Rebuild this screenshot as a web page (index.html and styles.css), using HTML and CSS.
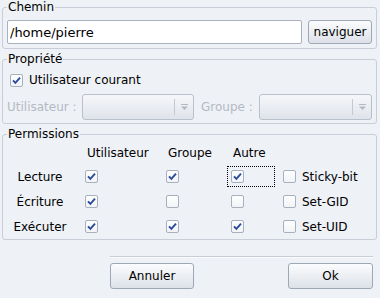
FILE: index.html
```html
<!DOCTYPE html>
<html lang="fr">
<head>
  <meta charset="UTF-8" />
  <title>Permissions</title>
  <link rel="stylesheet" href="styles.css">
</head>
<body>

  <!-- Chemin -->
  <fieldset class="group">
    <legend>Chemin</legend>
    <div class="path-row">
      <input class="path-input" type="text" value="/home/pierre">
      <button class="btn btn-browse">naviguer</button>
    </div>
  </fieldset>

  <!-- Propriété -->
  <fieldset class="group">
    <legend>Propriété</legend>
    <div class="check-row">
      <span class="cb"><svg viewBox="0 0 11 11"><path d="M2 5.3 L4.4 7.8 L9 2.6"/></svg></span>
      <span>Utilisateur courant</span>
    </div>
    <div class="owner-row">
      <span class="dim owner-label">Utilisateur :</span>
      <span class="combo combo-user"><span class="combo-arrow"><svg viewBox="0 0 9 8"><path class="bar" d="M1 1.5 H8"/><path class="tri" d="M1 3.5 H8 L4.5 7 Z"/></svg></span></span>
      <span class="dim group-label">Groupe :</span>
      <span class="combo combo-group"><span class="combo-arrow"><svg viewBox="0 0 9 8"><path class="bar" d="M1 1.5 H8"/><path class="tri" d="M1 3.5 H8 L4.5 7 Z"/></svg></span></span>
    </div>
  </fieldset>

  <!-- Permissions -->
  <fieldset class="group">
    <legend>Permissions</legend>
    <div class="perm-grid">
      <span></span>
      <span class="col-head">Utilisateur</span>
      <span class="col-head">Groupe</span>
      <span class="col-head">Autre</span>
      <span></span>

      <span class="row-label">Lecture</span>
      <span class="cell"><span class="cb"><svg viewBox="0 0 11 11"><path d="M2 5.3 L4.4 7.8 L9 2.6"/></svg></span></span>
      <span class="cell"><span class="cb"><svg viewBox="0 0 11 11"><path d="M2 5.3 L4.4 7.8 L9 2.6"/></svg></span></span>
      <span class="cell"><span class="focus"><span class="cb"><svg viewBox="0 0 11 11"><path d="M2 5.3 L4.4 7.8 L9 2.6"/></svg></span></span></span>
      <span class="cell"><span class="cb"></span><span class="cb-text">Sticky-bit</span></span>

      <span class="row-label">Écriture</span>
      <span class="cell"><span class="cb"><svg viewBox="0 0 11 11"><path d="M2 5.3 L4.4 7.8 L9 2.6"/></svg></span></span>
      <span class="cell"><span class="cb"></span></span>
      <span class="cell"><span class="cb"></span></span>
      <span class="cell"><span class="cb"></span><span class="cb-text">Set-GID</span></span>

      <span class="row-label">Exécuter</span>
      <span class="cell"><span class="cb"><svg viewBox="0 0 11 11"><path d="M2 5.3 L4.4 7.8 L9 2.6"/></svg></span></span>
      <span class="cell"><span class="cb"><svg viewBox="0 0 11 11"><path d="M2 5.3 L4.4 7.8 L9 2.6"/></svg></span></span>
      <span class="cell"><span class="cb"><svg viewBox="0 0 11 11"><path d="M2 5.3 L4.4 7.8 L9 2.6"/></svg></span></span>
      <span class="cell"><span class="cb"></span><span class="cb-text">Set-UID</span></span>
    </div>
  </fieldset>

  <!-- Buttons -->
  <div class="footer">
    <div class="separator"></div>
    <div class="footer-buttons">
      <button class="btn btn-dialog">Annuler</button>
      <button class="btn btn-dialog btn-ok">Ok</button>
    </div>
  </div>

</body>
</html>
```

FILE: styles.css
```css
body {
  margin: 0;
  padding: 0 3px 0 2px;
  background: #eef1f6;
  color: #000;
  font-family: "DejaVu Sans", sans-serif;
  font-size: 12px;
}
.group {
  margin: 3px 0 0 0;
  padding: 0 4px 3px 4px;
  border: 1px solid #c8cdd7;
  border-radius: 3px;
}
.group:first-child {
  margin-top: 0;
}
legend {
  padding: 0 1px;
  margin-left: 0;
  line-height: 15px;
}
.path-row {
  display: flex;
  gap: 6px;
  padding: 5px 0 1px 0;
}
.path-input {
  flex: 1;
  height: 24px;
  box-sizing: border-box;
  margin: 0;
  padding: 0 2px;
  border: 1px solid #a9b1be;
  border-radius: 2px;
  background: #fff;
  font-family: "DejaVu Sans", sans-serif;
  font-size: 13px;
  color: #000;
  outline: none;
}
.btn {
  margin: 0;
  padding: 0;
  box-sizing: border-box;
  border: 1px solid #9ea7b5;
  border-radius: 3px;
  background: linear-gradient(#fbfcfd, #dde1e8);
  font-family: "DejaVu Sans", sans-serif;
  font-size: 12px;
  color: #000;
}
.btn-browse {
  width: 64px;
  height: 24px;
}
.check-row {
  display: flex;
  align-items: center;
  gap: 6px;
  height: 16px;
  padding: 5px 0 0 3px;
}
.cb {
  display: inline-block;
  width: 13px;
  height: 13px;
  box-sizing: border-box;
  border: 1px solid #a8b0bd;
  border-radius: 2px;
  background: linear-gradient(#ffffff, #f1f3f6);
  flex: none;
}
.cb svg {
  display: block;
  width: 11px;
  height: 11px;
}
.cb svg path {
  fill: none;
  stroke: #2c4b9b;
  stroke-width: 1.9;
}
.owner-row {
  display: flex;
  align-items: center;
  margin-top: 6px;
  height: 26px;
}
.dim {
  color: #b4bac4;
}
.owner-label {
  width: 75px;
}
.group-label {
  width: 58px;
  margin-left: 7px;
}
.combo {
  position: relative;
  display: block;
  height: 26px;
  box-sizing: border-box;
  border: 1px solid #bac0cb;
  border-radius: 3px;
  background: linear-gradient(#f6f7fa, #dfe3ea);
}
.combo-user {
  width: 112px;
}
.combo-group {
  flex: 1;
}
.combo-arrow {
  position: absolute;
  top: 4px;
  right: 0;
  bottom: 4px;
  width: 18px;
  border-left: 1px solid #c3c9d3;
  display: flex;
  align-items: center;
  justify-content: center;
}
.combo-arrow svg {
  width: 9px;
  height: 8px;
}
.combo-arrow .bar {
  stroke: #b3b9c3;
  stroke-width: 1;
}
.combo-arrow .tri {
  fill: #b3b9c3;
}
.perm-grid {
  display: grid;
  grid-template-columns: 79px 81px 65px 52px 1fr;
  grid-template-rows: 22px 25px 25px 25px;
  margin: 0 -4px -3px -4px;
  align-items: center;
}
.col-head {
  padding-left: 5px;
}
.row-label {
  text-align: center;
  padding-right: 5px;
}
.cell {
  display: flex;
  align-items: center;
  gap: 6px;
  padding-left: 3px;
}
.focus {
  display: flex;
  align-items: center;
  width: 48px;
  height: 21px;
  box-sizing: border-box;
  margin-left: -4px;
  padding-left: 3px;
  border: 1px dotted #000;
}
.footer {
  margin: 16px 4px 0 108px;
}
.separator {
  height: 1px;
  background: #c8cdd7;
  border-bottom: 1px solid #fafbfc;
}
.footer-buttons {
  display: flex;
  justify-content: space-between;
  margin-top: 5px;
}
.btn-dialog {
  width: 84px;
  height: 26px;
}
.btn-ok {
  width: 85px;
}
```
